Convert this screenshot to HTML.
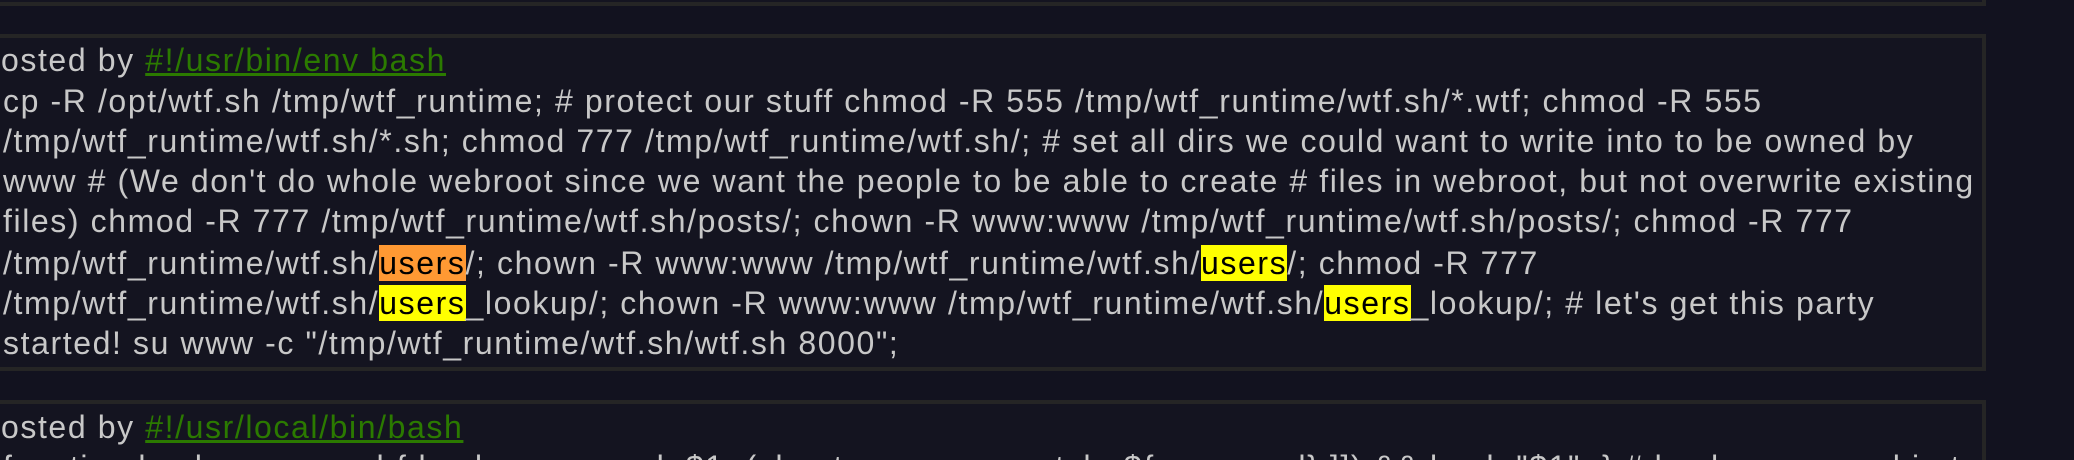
<!DOCTYPE html>
<html><head><meta charset="utf-8"><style>
html,body{margin:0;padding:0;background:#12121f;width:2074px;height:460px;overflow:hidden}
#w{position:absolute;left:0;top:0;width:2074px;height:460px;overflow:hidden}
body{font-family:"Liberation Sans",sans-serif;color:#c8c8c8}
.box{position:absolute;left:-10px;width:1996px;border:4px solid #252525;background:#141420;box-sizing:border-box}
.l{position:absolute;left:3px;white-space:nowrap;font-size:32px;line-height:40px;height:40px;letter-spacing:1.6px}
a{color:#2b7a00;text-decoration:underline}
.o{background:#ff9933;color:#000}
.y{background:#ffff00;color:#000}
</style></head><body><div id="w">
<div class="box" style="top:-10px;height:16px"></div>
<div class="box" style="top:34px;height:337px"></div>
<div class="box" style="top:400px;height:60px;border-bottom:none"></div>
<div class="l" style="top:40px;left:-22px">Posted by <a>#!/usr/bin/env bash</a></div>
<div class="l" style="top:81px">cp -R /opt/wtf.sh /tmp/wtf_runtime; # protect our stuff chmod -R 555 /tmp/wtf_runtime/wtf.sh/*.wtf; chmod -R 555</div>
<div class="l" style="top:121px">/tmp/wtf_runtime/wtf.sh/*.sh; chmod 777 /tmp/wtf_runtime/wtf.sh/; # set all dirs we could want to write into to be owned by</div>
<div class="l" style="top:161px">www # (We don't do whole webroot since we want the people to be able to create # files in webroot, but not overwrite existing</div>
<div class="l" style="top:201px">files) chmod -R 777 /tmp/wtf_runtime/wtf.sh/posts/; chown -R www:www /tmp/wtf_runtime/wtf.sh/posts/; chmod -R 777</div>
<div class="l" style="top:243px">/tmp/wtf_runtime/wtf.sh/<span class="o">users</span>/; chown -R www:www /tmp/wtf_runtime/wtf.sh/<span class="y">users</span>/; chmod -R 777</div>
<div class="l" style="top:283px">/tmp/wtf_runtime/wtf.sh/<span class="y">users</span>_lookup/; chown -R www:www /tmp/wtf_runtime/wtf.sh/<span class="y">users</span>_lookup/; # let's get this party</div>
<div class="l" style="top:323px">started! su www -c "/tmp/wtf_runtime/wtf.sh/wtf.sh 8000";</div>
<div class="l" style="top:407px;left:-22px">Posted by <a>#!/usr/local/bin/bash</a></div>
<div class="l" style="top:447px;width:1960px;overflow:hidden">function bash_command { bash_command=$1; (shopt -s nocasematch; ${command} ]]) && bash "$1"; } # bash_command in the</div>
</div></body></html>
